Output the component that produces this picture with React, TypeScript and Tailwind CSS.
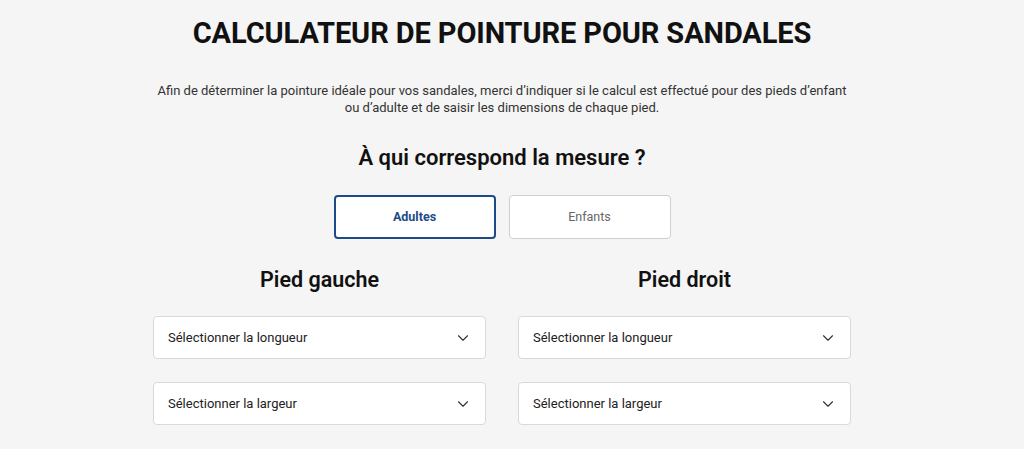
import React, { useState } from 'react';
import { ChevronDown } from 'lucide-react';

const font = { fontFamily: 'Roboto, "Noto Sans", sans-serif' };

const SelectBox = ({ label }: { label: string }) => (
  <button className="flex h-[43px] w-full items-center justify-between rounded-[4px] border border-[#d9d9d9] bg-white pl-[14px] pr-[13px] text-left text-[13px] text-[#222]">
    <span>{label}</span>
    <ChevronDown size={18} strokeWidth={1.5} className="text-[#333]" />
  </button>
);

const FootColumn = ({ title }: { title: string }) => (
  <div className="flex flex-col">
    <h3 className="mb-[23px] text-center text-[21.5px] font-semibold leading-[26px] text-[#111]">{title}</h3>
    <div className="flex flex-col gap-[23px]">
      <SelectBox label="Sélectionner la longueur" />
      <SelectBox label="Sélectionner la largeur" />
    </div>
  </div>
);

export default function App() {
  const [who, setWho] = useState<'adultes' | 'enfants'>('adultes');

  const active = 'h-[44px] w-[162px] rounded-[4px] border-2 border-[#1d4b87] bg-white text-[12.5px] font-bold text-[#1d4b87]';
  const idle = 'h-[44px] w-[162px] rounded-[4px] border border-[#cfcfcf] bg-white text-[12.5px] text-[#666]';

  return (
    <div className="min-h-[449px] bg-[#f5f5f5] pr-5" style={font}>
      <div className="mx-auto flex w-[698px] flex-col items-center pt-[15px]">
        <h1 className="text-[29px] font-bold leading-[36px] tracking-[-0.1px] text-[#111]">
          CALCULATEUR DE POINTURE POUR SANDALES
        </h1>

        <p className="mt-[31px] text-center text-[13px] leading-[17px] text-[#333]">
          Afin de déterminer la pointure idéale pour vos sandales, merci d’indiquer si le calcul est effectué pour des pieds d’enfant
          <br />
          ou d’adulte et de saisir les dimensions de chaque pied.
        </p>

        <h2 className="mt-[28px] text-[22px] font-semibold leading-[28px] text-[#111]">À qui correspond la mesure ?</h2>

        <div className="mt-[23px] flex gap-[13px]">
          <button onClick={() => setWho('adultes')} className={who === 'adultes' ? active : idle}>
            Adultes
          </button>
          <button onClick={() => setWho('enfants')} className={who === 'enfants' ? active : idle}>
            Enfants
          </button>
        </div>

        <div className="mt-[28px] grid w-full grid-cols-2 gap-x-[32px]">
          <FootColumn title="Pied gauche" />
          <FootColumn title="Pied droit" />
        </div>
      </div>
    </div>
  );
}
